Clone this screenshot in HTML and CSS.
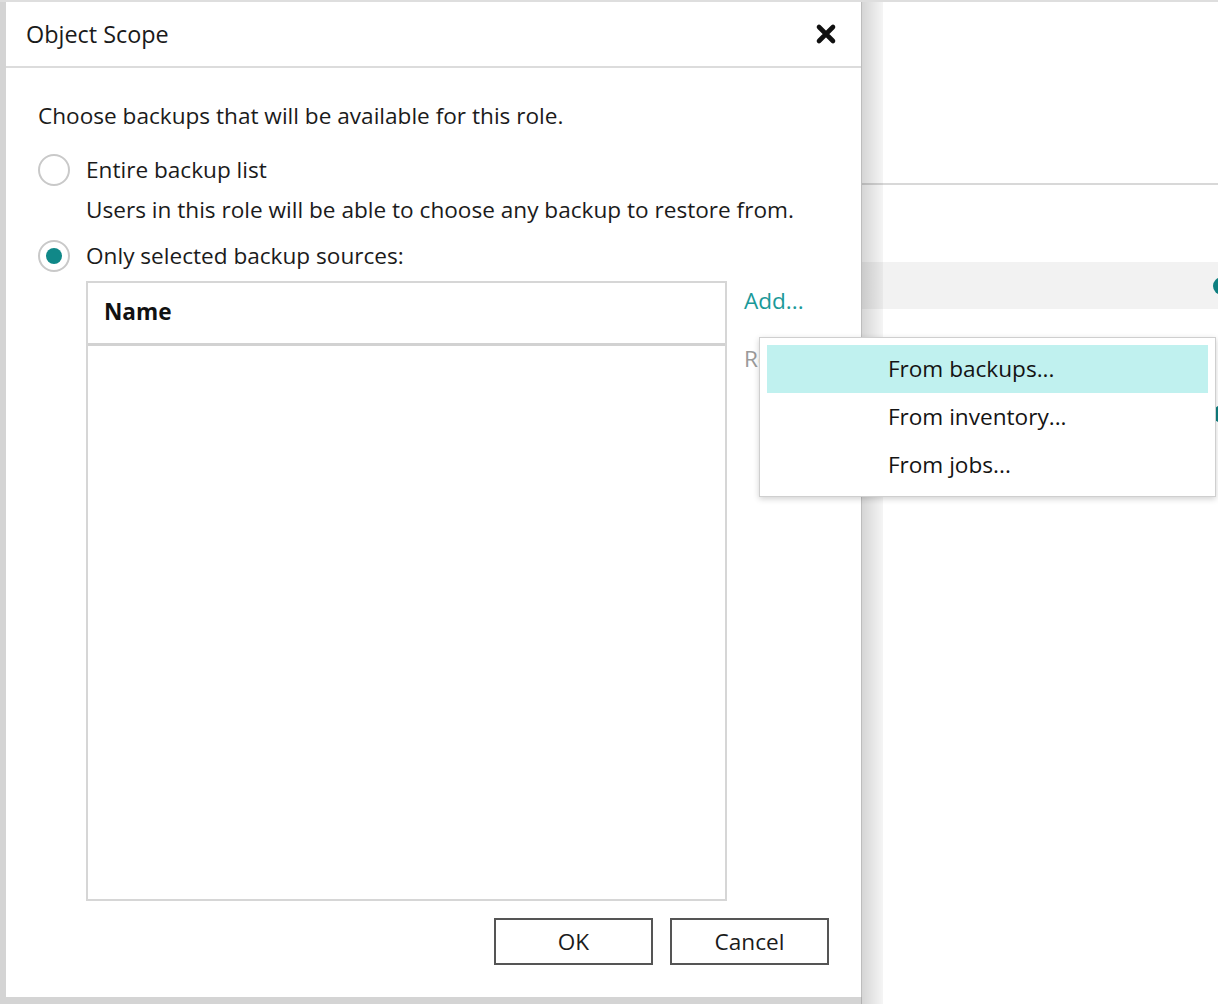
FILE: index.html
```html
<!DOCTYPE html>
<html lang="en">
<head>
<meta charset="utf-8">
<title>Object Scope</title>
<link rel="stylesheet" href="styles.css">
</head>
<body>
<div class="screen">
  <div class="left-col">
    <div class="dialog">
      <div class="dialog-header">
        <span class="dialog-title">Object Scope</span>
        <button class="close-btn" aria-label="Close">
          <svg width="22" height="22" viewBox="0 0 22 22"><path d="M4 4 L18 18 M18 4 L4 18" stroke="#111" stroke-width="4.6" stroke-linecap="round"/></svg>
        </button>
      </div>
      <div class="dialog-body">
        <p class="intro">Choose backups that will be available for this role.</p>
        <label class="radio-row">
          <span class="radio"></span>
          <span class="radio-label">Entire backup list</span>
        </label>
        <p class="hint">Users in this role will be able to choose any backup to restore from.</p>
        <label class="radio-row second">
          <span class="radio checked"><span class="dot"></span></span>
          <span class="radio-label">Only selected backup sources:</span>
        </label>
        <div class="sources">
          <div class="grid">
            <div class="grid-head">Name</div>
            <div class="grid-body"></div>
          </div>
          <div class="actions">
            <a class="link">Add...</a>
            <span class="link disabled">Remove</span>
            <div class="menu">
              <div class="menu-item active">From backups...</div>
              <div class="menu-item">From inventory...</div>
              <div class="menu-item">From jobs...</div>
            </div>
          </div>
        </div>
        <div class="footer">
          <button class="btn">OK</button>
          <button class="btn">Cancel</button>
        </div>
      </div>
    </div>
  </div>
  <div class="backdrop">
    <div class="bd-top"></div>
    <div class="bd-gap"></div>
    <div class="bd-band"><span class="bd-dot"></span></div>
    <div class="bd-row"><span class="bd-dot"></span></div>
  </div>
</div>
</body>
</html>
```
FILE: styles.css
```css
* { box-sizing: border-box; }
html, body { margin: 0; padding: 0; }
body {
  width: 1218px;
  height: 1004px;
  overflow: hidden;
  background: #ffffff;
  font-family: "Open Sans", "Noto Sans", sans-serif;
  font-size: 22.6px;
  color: #1b1b1b;
}
.screen {
  display: flex;
  height: 1004px;
  border-top: 2px solid #dedede;
}
.left-col {
  width: 862px;
  flex: none;
  background: #d4d4d4;
  padding-left: 6px;
  position: relative;
  z-index: 2;
}
.dialog {
  position: relative;
  width: 856px;
  height: 995px;
  background: #ffffff;
  border-right: 1px solid #e2e2e2;
  display: flex;
  flex-direction: column;
}
.dialog::after {
  content: "";
  position: absolute;
  top: 0;
  bottom: -7px;
  left: 100%;
  width: 22px;
  background: linear-gradient(to right, rgba(0,0,0,0.17), rgba(0,0,0,0.04));
  pointer-events: none;
}
.dialog-header {
  height: 66px;
  flex: none;
  display: flex;
  align-items: center;
  justify-content: space-between;
  padding: 0 24px 0 20px;
  border-bottom: 2px solid #dcdcdc;
}
.dialog-title {
  font-size: 23.4px;
  line-height: 64px;
  color: #1a1a1a;
}
.close-btn {
  border: 0;
  background: none;
  padding: 0;
  width: 22px;
  height: 22px;
  display: flex;
}
.dialog-body {
  flex: 1;
  display: flex;
  flex-direction: column;
  padding: 28px 32px 32px 32px;
}
.intro, .hint {
  margin: 0;
  line-height: 40px;
  white-space: nowrap;
}
.intro { margin-bottom: 14px; }
.hint { padding-left: 48px; }
.radio-row {
  display: flex;
  align-items: center;
  height: 40px;
  gap: 16px;
}
.radio-row.second { margin-top: 6px; }
.radio {
  width: 32px;
  height: 32px;
  border-radius: 50%;
  border: 2px solid #c9c9c9;
  display: flex;
  align-items: center;
  justify-content: center;
  flex: none;
}
.dot {
  width: 16px;
  height: 16px;
  border-radius: 50%;
  background: #108888;
}
.radio-label { line-height: 40px; white-space: nowrap; }
.sources {
  display: flex;
  margin: 5px 0 0 48px;
  gap: 17px;
}
.grid {
  width: 641px;
  height: 620px;
  border: 2px solid #d6d6d6;
  display: flex;
  flex-direction: column;
}
.grid-head {
  height: 63px;
  flex: none;
  border-bottom: 3px solid #d2d2d2;
  font-weight: 700;
  padding-left: 16px;
  line-height: 58px;
  color: #111;
}
.grid-body { flex: 1; }
.actions {
  position: relative;
  display: flex;
  flex-direction: column;
}
.link {
  line-height: 40px;
  color: #1b9999;
  cursor: pointer;
  white-space: nowrap;
}
.link.disabled {
  color: #9a9a9a;
  margin-top: 18px;
}
.menu {
  position: absolute;
  left: 15px;
  top: 56px;
  width: 457px;
  padding: 7px;
  background: #ffffff;
  border: 1px solid #cfcfcf;
  box-shadow: 0 2px 6px rgba(0,0,0,0.18);
  z-index: 5;
}
.menu-item {
  height: 48px;
  line-height: 48px;
  padding-left: 121px;
  color: #141414;
  white-space: nowrap;
}
.menu-item.active { background: #c0f1ef; }
.footer {
  display: flex;
  justify-content: flex-end;
  gap: 17px;
  margin-top: 17px;
}
.btn {
  width: 159px;
  height: 47px;
  border: 2px solid #555555;
  background: #ffffff;
  font-family: inherit;
  font-size: 22.6px;
  color: #1b1b1b;
  padding: 0;
}
.backdrop {
  flex: 1;
  display: flex;
  flex-direction: column;
  overflow: hidden;
  position: relative;
  z-index: 1;
}
.bd-top {
  height: 183px;
  border-bottom: 2px solid #d8d8d8;
  flex: none;
}
.bd-gap { height: 77px; flex: none; }
.bd-band {
  height: 47px;
  background: #f2f2f2;
  display: flex;
  align-items: center;
  justify-content: flex-end;
  flex: none;
}
.bd-row {
  height: 56px;
  margin-top: 77px;
  display: flex;
  align-items: center;
  justify-content: flex-end;
}
.bd-dot {
  width: 18px;
  height: 18px;
  border-radius: 50%;
  background: #0e7f80;
  margin-right: -13px;
}
```
